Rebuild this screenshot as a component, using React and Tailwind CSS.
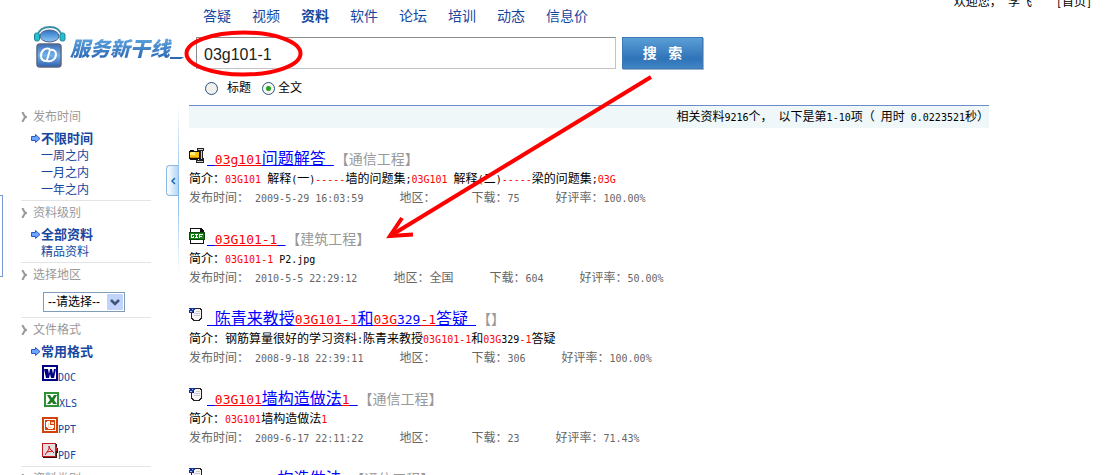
const NAV = ['答疑', '视频', '资料', '软件', '论坛', '培训', '动态', '信息价'];

// Highlighted parts of a string are wrapped in asterisks
const RESULTS = [
    {
        icon: 'zip',
        title: '*03g101*问题解答',
        category: '通信工程',
        desc: '*03G101* 解释(一)*-----*墙的问题集;*03G101* 解释(二)*-----*梁的问题集;*03G*',
        date: '2009-5-29 16:03:59',
        area: '',
        downloads: '75',
        rate: '100.00%',
    },
    {
        icon: 'gif',
        title: '*03G101-1*',
        category: '建筑工程',
        desc: '*03G101-1* P2.jpg',
        date: '2010-5-5 22:29:12',
        area: '全国',
        downloads: '604',
        rate: '50.00%',
    },
    {
        icon: 'doc',
        title: '陈青来教授*03G101-1*和*03G*329*-1*答疑',
        category: '',
        desc: '钢筋算量很好的学习资料:陈青来教授*03G101-1*和*03G*329*-1*答疑',
        date: '2008-9-18 22:39:11',
        area: '',
        downloads: '306',
        rate: '100.00%',
    },
    {
        icon: 'doc',
        title: '*03G101*墙构造做法*1*',
        category: '通信工程',
        desc: '*03G101*墙构造做法*1*',
        date: '2009-6-17 22:11:22',
        area: '',
        downloads: '23',
        rate: '71.43%',
    },
    {
        icon: 'doc',
        title: '*03G101-1*构造做法',
        category: '通信工程',
        desc: '*03G101-1*构造做法',
        date: '2009-6-17 22:10:05',
        area: '',
        downloads: '31',
        rate: '80.00%',
    },
];

// Latin runs are set in a half-width face next to the full-width characters
const Mixed = ({ text, large }) =>
    text.split(/([\x20-\x7e]+)/).map((part, i) =>
        i % 2 === 1 ? (
            <span key={i} className={`whitespace-pre font-['DejaVu_Sans_Mono',monospace] ${large ? 'text-[13px]' : 'text-[10px]'}`}>
                {part}
            </span>
        ) : (
            part
        )
    );

const Marked = ({ text, large }) =>
    text.split('*').map((part, i) => (
        <span key={i} className={`${i % 2 === 1 ? 'text-[#ff0000]' : ''} ${large ? 'underline' : ''}`}>
            <Mixed text={part} large={large} />
        </span>
    ));

const ResultIcon = ({ type }) => {
    if (type === 'zip') {
        return (
            <svg width="16" height="16" viewBox="0 0 16 16" className="shrink-0" shapeRendering="crispEdges">
                <path d="M8 0h7v3h-1v7h1v5H7v-3h3V4H8z" fill="#222" />
                <path d="M9 1h5v1H9zM12 3h1v8h-1zM8 13h6v1H8z" fill="#ccc" />
                <path d="M0 3h1V2h4v1h6v8H9v1H1v-1H0z" fill="#111" />
                <path d="M1 4h9v6H1z" fill="#ffc40a" />
                <path d="M2 4h4v1H2zM1 5h5v2H1z" fill="#fff27a" />
                <path d="M1 9h9v1H1z" fill="#c88a00" />
            </svg>
        );
    }
    if (type === 'gif') {
        return (
            <svg width="16" height="16" viewBox="0 0 16 16" className="shrink-0" shapeRendering="crispEdges">
                <path d="M1 0h11l3 3v13H1z" fill="#111" />
                <path d="M2 1h9v3h3v11H2z" fill="#fff" />
                <path d="M0 4h16v8H0z" fill="#0b4a0b" />
                <path d="M1 5h14v6H1z" fill="#168016" />
                <path
                    d="M2 6h3v1H3v2h1V8h1v2H2zM6 6h3v1H8v2h1v1H6V9h1V7H6zM10 6h4v1h-3v1h2v1h-2v1h-1z"
                    fill="#fff"
                />
            </svg>
        );
    }
    return (
        <svg width="16" height="16" viewBox="0 0 16 16" className="shrink-0" shapeRendering="crispEdges">
            <path d="M4 0h8v1h1v10h-1v1h-1v1H4v-1H3v-1H2V4h2z" fill="#222" />
            <path d="M5 1h6v1h1v8h-1v1h-1v1H5v-1H4v-1H3V5h2z" fill="#f4f4f6" />
            <path d="M0 0h6v2H5v2H4v1H0z" fill="#1a2f9c" />
            <path d="M1 3h2v1H1zM3 1h1v1H3zM0 1h1v1H0z" fill="#8fd0ff" />
            <path d="M7 3h4v1H7zM5 5h6v1H5zM5 7h6v1H5z" fill="#c9c9d2" />
        </svg>
    );
};

const FileIcon = ({ type }) => {
    const props = { width: 16, height: 16, viewBox: '0 0 16 16', shapeRendering: 'crispEdges' };
    if (type === 'DOC') {
        return (
            <svg {...props}>
                <path d="M0 0h16v16H0z" fill="#000083" />
                <path d="M2 2h12v12H2z" fill="#fff" />
                <path d="M2 4h4l1 5 1-5h2l1 5 1-5h2l-2 9h-3L8 9l-1 4H4z" fill="#000083" shapeRendering="auto" />
            </svg>
        );
    }
    if (type === 'XLS') {
        return (
            <svg {...props} width="15" height="15" viewBox="0 0 15 15" className="ml-[2px]">
                <path d="M0 0h15v15H0z" fill="#2f9236" />
                <path d="M2 2h11v11H2z" fill="#fff" />
                <path d="M3 3h3l2 3 2-3h3l-3 5 3 4H9L8 10l-2 2H3l3-4z" fill="#1c7a24" shapeRendering="auto" />
            </svg>
        );
    }
    if (type === 'PPT') {
        return (
            <svg {...props}>
                <path d="M0 0h16v16H0z" fill="#d2420c" />
                <path d="M2 2h12v12H2z" fill="#fff" />
                <path d="M3 3h10v10H3z" fill="#d2420c" />
                <path d="M5 4h3v4h4v2l-2 2H6L4 10V6z" fill="#fff" />
                <path d="M6 6h1v4h3v1H6zM9 5h3v2H9z" fill="#fbd9b0" />
            </svg>
        );
    }
    return (
        <svg {...props}>
            <path d="M1 1h14v4h1v5h-1v5H1z" fill="#3a1010" />
            <path d="M0 0h14v14H0z" fill="#c4141c" />
            <path d="M1 1h12v12H1z" fill="#e6dede" />
            <path d="M3 12l4-6V3l1 3 4 4M5 9l6-1" fill="none" stroke="#d0101c" shapeRendering="auto" />
            <path d="M13 4h2v4h-2z" fill="#e01a20" />
        </svg>
    );
};

const Logo = () => (
    <a href="#home" className="flex w-[189px] shrink-0 items-start pt-[26px] pl-[34px]">
        <svg width="32" height="42" viewBox="0 0 32 42" className="shrink-0">
            <defs>
                <linearGradient id="body" x1="0" y1="0" x2="0" y2="1">
                    <stop offset="0" stopColor="#3a6db8" />
                    <stop offset=".5" stopColor="#74b2ea" />
                    <stop offset="1" stopColor="#2f5fae" />
                </linearGradient>
                <linearGradient id="face" x1="0" y1="0" x2="0" y2="1">
                    <stop offset="0" stopColor="#2f72c4" />
                    <stop offset="1" stopColor="#8ccaf6" />
                </linearGradient>
            </defs>
            <path d="M3 10C5 3 11 1 16 1s10 2 12 9" fill="none" stroke="#3d8fa8" strokeWidth="2" />
            <ellipse cx="15.500" cy="10" rx="9.500" ry="6" fill="url(#face)" stroke="#4a5f88" />
            <rect x="0.500" y="7" width="5" height="8" rx="2" fill="#21c2d0" stroke="#26809a" />
            <rect x="26" y="7" width="5" height="8" rx="2" fill="#21c2d0" stroke="#26809a" />
            <rect x="3" y="18" width="24" height="23" rx="3" fill="url(#body)" stroke="#5d6680" strokeWidth="1.500" />
            <path d="M16 23c-5-2-9 2-9 7 0 3 2 5 6 5" fill="none" stroke="#fff" strokeWidth="2" />
            <path d="M13 35c5 1 9-2 9-7 0-3-3-5-6-4l-3 10" fill="none" stroke="#fff" strokeWidth="2" />
        </svg>
        <span className="mt-[7px] ml-[4px] bg-gradient-to-b from-[#6cb2e8] to-[#1b57a8] bg-clip-text pr-[6px] text-xl leading-8 font-black whitespace-nowrap text-transparent italic">
            服务新干线
        </span>
        <svg width="14" height="4" viewBox="0 0 14 4" className="mt-[30px] -ml-[6px] shrink-0">
            <path d="M0 1h14l-3 2H0z" fill="#2a68b4" />
        </svg>
    </a>
);

const Group = ({ title, children }) => (
    <section className="border-b border-[#e4e4e4] pt-[4px] pb-[2px]">
        <h2 className="flex h-4 items-center text-[#999]">
            <svg width="6" height="10" viewBox="0 0 6 10" className="mr-[6px]">
                <path d="M1 0c2 1 1 4 4 5-3 1-2 4-4 5" fill="none" stroke="#999" strokeWidth="2" />
            </svg>
            {title}
        </h2>
        {children}
    </section>
);

const Current = ({ children }) => (
    <a href="#current" className="mt-[5px] flex h-[17px] items-center pl-[10px] text-[13px] font-bold">
        <svg width="10" height="9" viewBox="0 0 10 9">
            <path d="M.5 2.500h4v-2l4.500 4-4.500 4v-2h-4z" fill="#6fa4ff" stroke="#2858c4" />
        </svg>
        {children}
    </a>
);

const Option = ({ children }) => (
    <a href="#option" className="flex h-[17px] items-center pl-5">
        {children}
    </a>
);

const Sidebar = () => (
    <aside className="ml-[18px] w-[130px] shrink-0 text-[#17479e]">
        <Group title="发布时间">
            <Current>不限时间</Current>
            <Option>一周之内</Option>
            <Option>一月之内</Option>
            <Option>一年之内</Option>
        </Group>
        <Group title="资料级别">
            <Current>全部资料</Current>
            <Option>精品资料</Option>
        </Group>
        <Group title="选择地区">
            <div className="relative mt-[9px] mb-[3px] ml-[22px] h-5 w-[82px]">
                <select
                    aria-label="选择地区"
                    className="block h-5 w-full appearance-none border border-[#7f9db9] bg-white pl-1 text-black outline-none"
                >
                    <option>--请选择--</option>
                </select>
                <svg width="16" height="16" viewBox="0 0 16 16" className="pointer-events-none absolute top-[2px] right-[2px]">
                    <rect width="16" height="16" rx="1" fill="#c1d2fb" />
                    <path d="M4 6l4 4 4-4" fill="none" stroke="#3e5576" strokeWidth="2.500" />
                </svg>
            </div>
        </Group>
        <Group title="文件格式">
            <Current>常用格式</Current>
            {['DOC', 'XLS', 'PPT', 'PDF'].map(type => (
                <a key={type} href={`#${type}`} className="flex h-[26px] items-center pl-[21px]">
                    <FileIcon type={type} />
                    <span className="mt-[10px] font-['DejaVu_Sans_Mono',monospace] text-[10px]">{type}</span>
                </a>
            ))}
        </Group>
        <Group title="资料类别" />
    </aside>
);

const Result = ({ item }) => (
    <li className="pb-5 whitespace-nowrap">
        <h3 className="flex h-[22px] items-start">
            <span className="mt-px mr-[2px]">
                <ResultIcon type={item.icon} />
            </span>
            <a href="#result" className="text-base leading-[24px] text-[#0000ff] underline">
                <Marked text={' ' + item.title + ' '} large />
            </a>
            <span className="ml-px text-sm leading-[24px] text-[#999]">{`【${item.category}】`}</span>
        </h3>
        <p className="h-5 leading-5 text-black">
            简介：
            <Marked text={item.desc} />
        </p>
        <p className="flex h-[18px] gap-9 leading-[18px] text-[#666]">
            <span><Mixed text={`发布时间： ${item.date}`} /></span>
            <span><Mixed text={`地区：${item.area}`} /></span>
            <span><Mixed text={`下载：${item.downloads}`} /></span>
            <span><Mixed text={`好评率：${item.rate}`} /></span>
        </p>
    </li>
);

const SearchForm = () => (
    <form className="pl-[7px]" onSubmit={e => e.preventDefault()}>
        <div className="flex gap-[6px]">
            <input
                type="text"
                aria-label="搜索"
                defaultValue="03g101-1"
                className="h-8 w-[420px] border border-[#c3c3c3] border-t-[#8c8c8c] border-l-[#8c8c8c] bg-white pt-1 pl-[7px] text-base text-[#222] outline-none"
            />
            <button
                type="submit"
                className="h-8 w-[81px] border border-[#3f78b5] bg-gradient-to-b from-[#5a9fd6] via-[#2f73b8] via-70% to-[#4085c6] text-sm font-bold whitespace-pre text-white shadow-[1px_1px_0_#9fb4cc]"
            >
                搜{'  '} 索
            </button>
        </div>
        <div className="mt-[9px] flex h-5 items-center pl-[9px] text-black">
            <input
                id="by-title"
                type="radio"
                name="scope"
                className="size-[13px] appearance-none rounded-full border border-[#2a5580] bg-[#f0f0ec] checked:bg-[radial-gradient(circle,#21a121_25%,#f6f6f2_40%)]"
            />
            <label htmlFor="by-title" className="ml-[9px]">标题</label>
            <input
                id="by-text"
                type="radio"
                name="scope"
                defaultChecked
                className="ml-[11px] size-[13px] appearance-none rounded-full border border-[#2a5580] bg-[#f0f0ec] checked:bg-[radial-gradient(circle,#21a121_25%,#f6f6f2_40%)]"
            />
            <label htmlFor="by-text" className="ml-[3px]">全文</label>
        </div>
    </form>
);

// Hand-drawn marks laid over the page
const Annotations = () => (
    <svg width="720" height="260" viewBox="0 0 720 260" className="pointer-events-none absolute top-0 left-0" fill="none" stroke="#ff0000" strokeWidth="4">
        <ellipse cx="243.500" cy="53.500" rx="57" ry="21" />
        <path d="M651 77L390 236" />
        <path d="M402 218L390 236L413 234.500" />
    </svg>
);

export default function App() {
    return (
        <div className="relative h-screen overflow-hidden bg-white font-['Liberation_Sans','Noto_Sans_CJK_SC',sans-serif] text-xs">
            <header className="flex h-[105px] items-start">
                <Logo />
                <div className="shrink-0">
                    <nav className="flex h-[37px] gap-[21px] pt-[6px] pl-[14px] text-sm leading-5 text-[#17479e]">
                        {NAV.map(name => (
                            <a key={name} href={`#${name}`} className={name === '资料' ? 'font-bold' : ''}>
                                {name}
                            </a>
                        ))}
                    </nav>
                    <SearchForm />
                </div>
                <div className="-mt-[6px] mr-[22px] ml-auto flex gap-6 leading-4 whitespace-nowrap text-black">
                    <span><Mixed text="欢迎您， 李飞" /></span>
                    <a href="#index"><Mixed text="[首页]" /></a>
                </div>
            </header>

            <div className="flex items-start">
                <div className="mt-[90px] h-[82px] w-[3px] shrink-0 border border-l-0 border-[#7a96d4]" />
                <Sidebar />
                <div className="ml-[15px] flex shrink-0">
                    <button
                        type="button"
                        aria-label="收起"
                        className="mt-[60px] flex h-[31px] w-3 items-center justify-center rounded-l-sm border border-r-0 border-[#8ab8e0] bg-gradient-to-r from-white to-[#b4d6f4]"
                    >
                        <svg width="6" height="8" viewBox="0 0 6 8">
                            <path d="M5 1L2 4l3 3" fill="none" stroke="#1b6ab8" strokeWidth="1.500" />
                        </svg>
                    </button>
                    <div className="h-[168px] w-px bg-gradient-to-b from-white via-[#7ab4e8] to-white" />
                </div>

                <main className="mr-[125px] ml-[10px] min-w-0 flex-1">
                    <p className="h-[23px] border-t border-[#6a8cc8] bg-[#eff7f9] text-right leading-[22px] text-black">
                        <Mixed text="相关资料9216个， 以下是第1-10项（ 用时 0.0223521秒）" />
                    </p>
                    <ul className="pt-[19px]">
                        {RESULTS.map((item, i) => (
                            <Result key={i} item={item} />
                        ))}
                    </ul>
                </main>
            </div>
            <Annotations />
        </div>
    );
}
